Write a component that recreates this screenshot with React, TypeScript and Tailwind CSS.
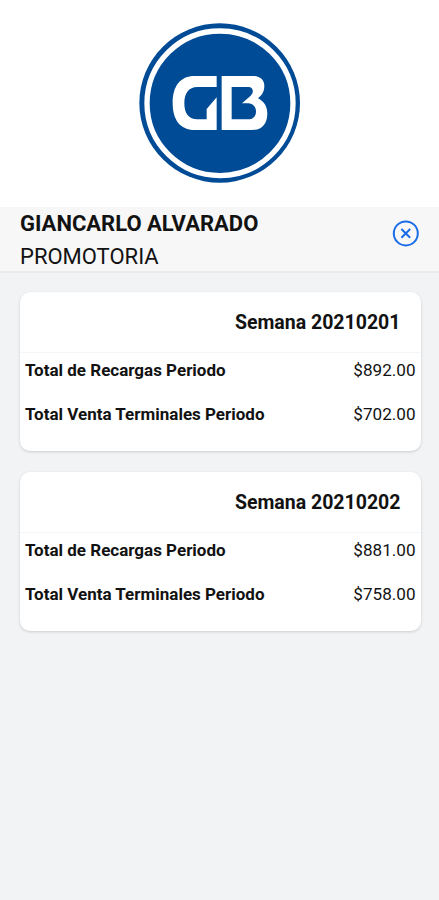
interface Row {
  label: string;
  amount: string;
}

interface Week {
  title: string;
  rows: Row[];
}

const weeks: Week[] = [
  {
    title: "Semana 20210201",
    rows: [
      { label: "Total de Recargas Periodo", amount: "$892.00" },
      { label: "Total Venta Terminales Periodo", amount: "$702.00" },
    ],
  },
  {
    title: "Semana 20210202",
    rows: [
      { label: "Total de Recargas Periodo", amount: "$881.00" },
      { label: "Total Venta Terminales Periodo", amount: "$758.00" },
    ],
  },
];

function Logo() {
  return (
    <svg viewBox="0 0 540 525" className="h-[175px] w-[180px]" aria-label="GB">
      <ellipse cx="269" cy="264" rx="241" ry="239" fill="#004b96" />
      <ellipse cx="270" cy="265" rx="219" ry="217" fill="none" stroke="#fff" strokeWidth="16" />
      <path
        d="M260 183H194C150 183 128 214 128 264S150 345 194 345H260V247L230 282V313H202C176 313 163 295 163 265S176 216 202 216H260Z"
        fill="#fff"
      />
      <path
        d="M275 183H366C391 183 403 195 403 212C403 230 396 239 384 250C402 259 412 274 412 296C412 326 396 345 366 345H275ZM305 216V313H353C369 313 378 304 378 290S369 265 355 265H336L362 242C372 232 371 216 355 216Z"
        fill="#fff"
        fillRule="evenodd"
      />
    </svg>
  );
}

function CloseIcon() {
  return (
    <svg viewBox="0 0 28 28" className="size-7" fill="none" stroke="#1a6de8">
      <circle cx="13.8" cy="14.4" r="12" strokeWidth="2" />
      <path d="M9.4 10L18.2 18.8M18.2 10L9.4 18.8" strokeWidth="2" />
    </svg>
  );
}

function WeekCard({ week }: { week: Week }) {
  return (
    <section className="h-[159px] rounded-[10px] bg-white shadow-[0_1px_3px_rgba(0,0,0,0.16)]">
      <h2 className="h-[61px] border-b border-[#f4f5f6] pr-5 text-right text-[19.5px] leading-[61px] font-bold">
        {week.title}
      </h2>
      {week.rows.map((row) => (
        <div key={row.label} className="flex h-11 justify-between px-[5px] leading-[35px]">
          <span className="text-[17px] font-bold">{row.label}</span>
          <span className="text-[17.1px]">{row.amount}</span>
        </div>
      ))}
    </section>
  );
}

export default function App() {
  return (
    <div className="flex h-[900px] flex-col bg-[#f1f3f5] font-[Roboto,sans-serif] text-[#121212]">
      <header className="flex h-[207px] justify-center bg-white pt-[15px]">
        <Logo />
      </header>

      <div className="flex h-[66px] justify-between border-b-2 border-[#e9ebed] bg-[#f7f7f7] pr-[19px] pl-5">
        <div className="text-[22px] leading-[33px]">
          <h1 className="font-bold">GIANCARLO ALVARADO</h1>
          <p>PROMOTORIA</p>
        </div>
        <button type="button" aria-label="Cerrar" className="mt-3 size-7">
          <CloseIcon />
        </button>
      </div>

      <main className="flex flex-col gap-[21px] pt-[19px] pr-[18.5px] pl-5">
        {weeks.map((week) => (
          <WeekCard key={week.title} week={week} />
        ))}
      </main>
    </div>
  );
}
